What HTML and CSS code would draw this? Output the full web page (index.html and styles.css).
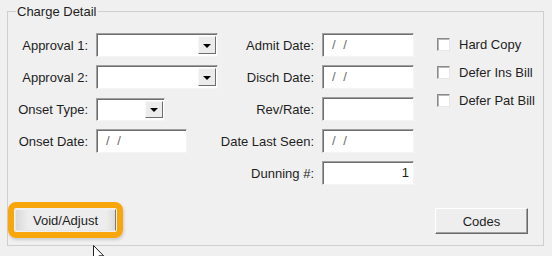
FILE: index.html
```html
<!DOCTYPE html>
<html lang="en">
<head>
    <meta charset="UTF-8">
    <meta name="viewport" content="width=device-width, initial-scale=1.0">
    <title>Charge Detail</title>
    <link rel="stylesheet" href="styles.css">
</head>
<body>
    <fieldset class="group">
        <legend>Charge Detail</legend>
        <div class="form-grid">
            <label class="lbl">Approval 1:</label>
            <div class="combo combo-wide"><span class="combo-btn"></span></div>
            <label class="lbl">Admit Date:</label>
            <div class="textbox date">/ /</div>

            <div class="checks">
                <label class="check"><span class="box"></span>Hard Copy</label>
                <label class="check"><span class="box"></span>Defer Ins Bill</label>
                <label class="check"><span class="box"></span>Defer Pat Bill</label>
            </div>

            <label class="lbl">Approval 2:</label>
            <div class="combo combo-wide"><span class="combo-btn"></span></div>
            <label class="lbl">Disch Date:</label>
            <div class="textbox date">/ /</div>

            <label class="lbl">Onset Type:</label>
            <div class="combo combo-small"><span class="combo-btn"></span></div>
            <label class="lbl">Rev/Rate:</label>
            <div class="textbox"></div>

            <label class="lbl">Onset Date:</label>
            <div class="textbox date onset">/ /</div>
            <label class="lbl">Date Last Seen:</label>
            <div class="textbox date">/ /</div>

            <span></span>
            <span></span>
            <label class="lbl">Dunning #:</label>
            <div class="textbox number">1</div>
        </div>

        <div class="actions">
            <span class="highlight"><button class="btn flat">Void/Adjust</button></span>
            <button class="btn raised">Codes</button>
        </div>
    </fieldset>

    <!-- mouse pointer -->
    <svg class="cursor" width="14" height="20" viewBox="0 0 14 20">
        <path d="M1.5 1.5 L1.5 16 L5 12.5 L7.3 17.8 L9.2 17 L6.9 11.8 L11.6 11.8 Z" fill="#fff" stroke="#222" stroke-width="1" stroke-linejoin="round"/>
    </svg>
</body>
</html>
```

FILE: styles.css
```css
body {
    margin: 0;
    padding: 4px 8px 0 7px;
    background-color: #f0f0f0;
    font-family: "Liberation Sans", Arial, sans-serif;
    font-size: 13px;
    color: #1e1e1e;
}

.group {
    margin: 0;
    padding: 0 15px 7px 0;
    border: 1px solid #cfcfcf;
    min-width: 0;
}

.group legend {
    margin-left: 8px;
    padding: 0 1px;
    line-height: 15px;
}

.form-grid {
    display: grid;
    grid-template-columns: 80px 130px 96px 100px 1fr;
    grid-template-rows: repeat(5, 24px);
    row-gap: 8px;
    align-items: center;
    margin-top: 14px;
}

.lbl {
    text-align: right;
    white-space: nowrap;
}

/* text box with sunken 3D edge */
.textbox {
    box-sizing: border-box;
    height: 24px;
    margin-left: 8px;
    padding: 0 9px;
    line-height: 22px;
    background: #fff;
    border: 1px solid;
    border-color: #a0a0a0 #f4f4f4 #f4f4f4 #a0a0a0;
    box-shadow: inset 1px 1px 0 #6e6e6e;
}

.date {
    color: #6a6a6a;
    word-spacing: 4px;
}

.onset {
    width: 91px;
}

.number {
    text-align: right;
    padding-right: 4px;
}

.combo {
    box-sizing: border-box;
    height: 24px;
    margin-left: 8px;
    display: flex;
    justify-content: flex-end;
    padding: 2px 1px 2px 0;
    background: #fff;
    border: 1px solid;
    border-color: #a0a0a0 #f4f4f4 #f4f4f4 #a0a0a0;
    box-shadow: inset 1px 1px 0 #6e6e6e;
}

.combo-wide {
    width: 122px;
}

.combo-small {
    width: 69px;
    height: 23px;
}

.combo-btn {
    box-sizing: border-box;
    width: 18px;
    display: flex;
    align-items: center;
    justify-content: center;
    background: #ececec;
    border: 1px solid;
    border-color: #f8f8f8 #6e6e6e #6e6e6e #f8f8f8;
}

.combo-btn::after {
    content: "";
    border-left: 4px solid transparent;
    border-right: 4px solid transparent;
    border-top: 4px solid #000;
    margin-top: 1px;
}

.checks {
    grid-column: 5;
    grid-row: 1 / span 5;
    align-self: start;
    display: flex;
    flex-direction: column;
    gap: 6px;
    margin-left: 23px;
}

.check {
    display: flex;
    align-items: center;
    gap: 9px;
    height: 22px;
    white-space: nowrap;
}

.check .box {
    box-sizing: border-box;
    width: 13px;
    height: 13px;
    background: #fff;
    border: 1px solid;
    border-color: #8a8a8a #e6e6e6 #e6e6e6 #8a8a8a;
    box-shadow: inset 1px 1px 0 #b5b5b5;
}

.actions {
    display: flex;
    justify-content: space-between;
    align-items: flex-start;
    margin-top: 17px;
}

.highlight {
    display: inline-block;
    padding: 1px;
    border: 6px solid #f7a70c;
    border-radius: 8px;
    box-shadow: 1px 2px 3px rgba(0, 0, 0, 0.15);
}

.btn {
    display: block;
    font-family: inherit;
    font-size: 13px;
    color: #1e1e1e;
    padding: 0;
    margin: 0;
}

.flat {
    width: 101px;
    height: 22px;
    background: linear-gradient(to right, #d9d9d9 0, #ededed 12px, #ededed 90px, #dcdcdc 100%);
    border: 1px solid;
    border-color: #f0f0f0 #7a7a7a #e6e6e6 #e6e6e6;
}

.raised {
    width: 93px;
    height: 26px;
    margin-top: 6px;
    background: #eeeeee;
    border: 1px solid;
    border-color: #fff #696969 #696969 #fff;
    box-shadow: inset -1px -1px 0 #a0a0a0;
}

.cursor {
    position: absolute;
    left: 92px;
    top: 244px;
}
```
